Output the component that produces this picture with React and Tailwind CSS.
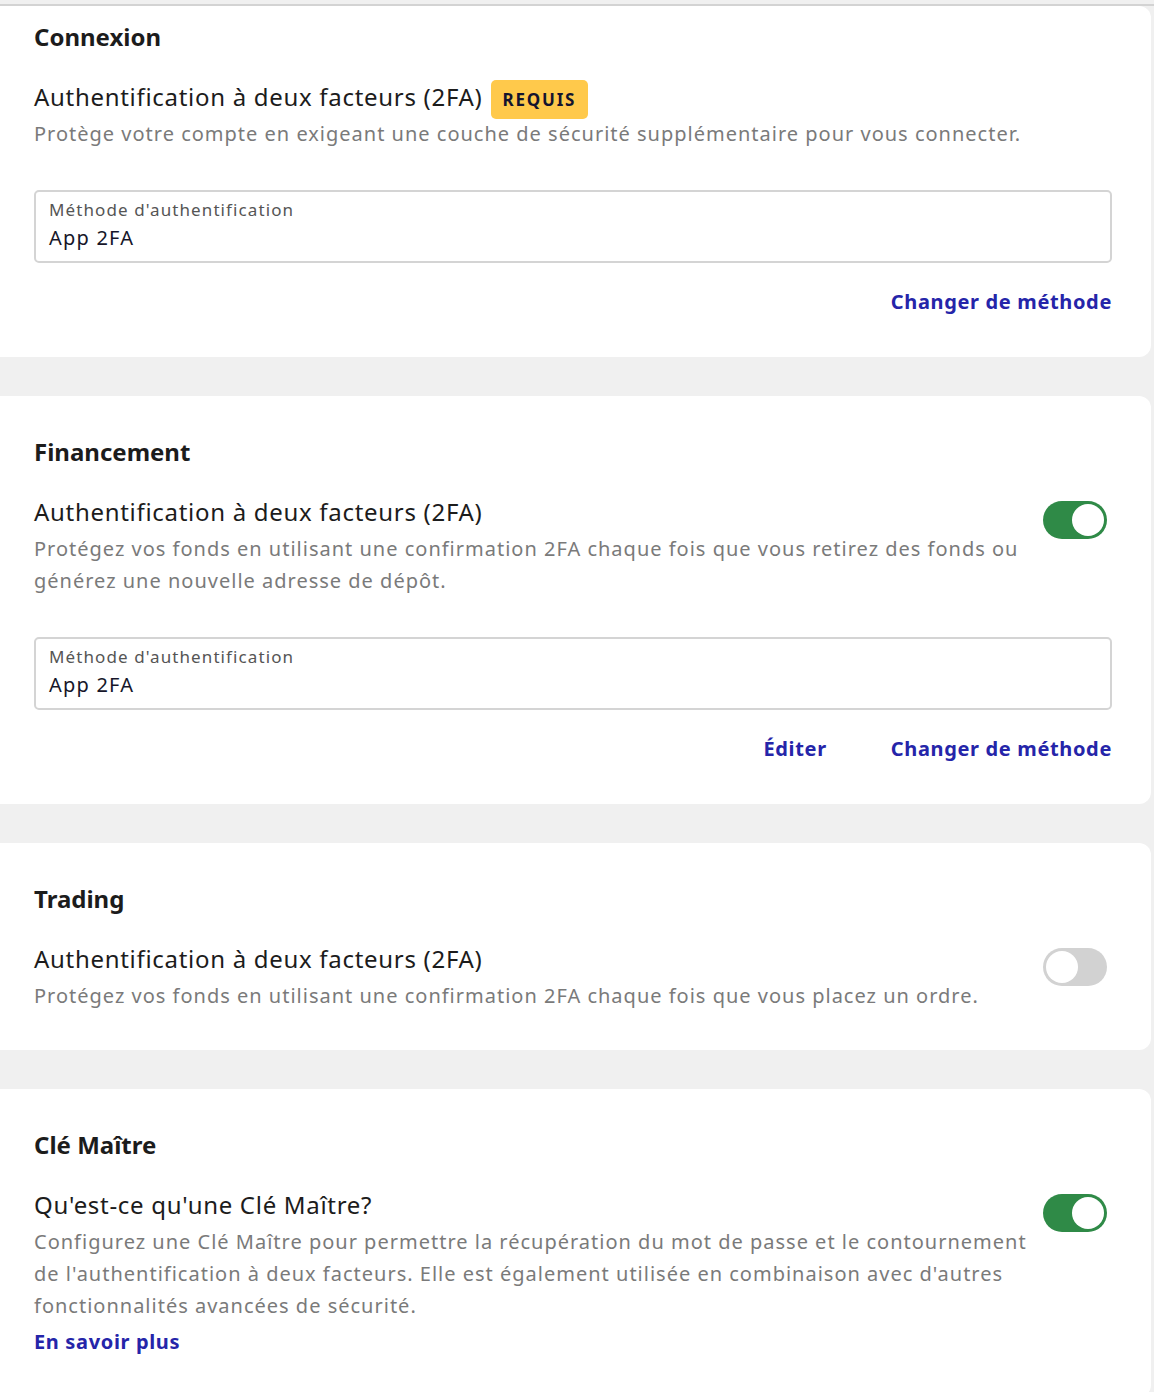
const font = { fontFamily: '"Noto Sans", "Open Sans", sans-serif' };

function Toggle({ on }) {
  return (
    <div
      className={`mt-[5px] mr-[5px] w-16 h-[38px] shrink-0 rounded-full p-[3px] flex items-center ${
        on ? "bg-[#2f8a47] justify-end" : "bg-[#d2d2d2] justify-start"
      }`}
    >
      <div className="w-8 h-8 rounded-full bg-white" />
    </div>
  );
}

function Method() {
  return (
    <div className="mt-[40px] border-2 border-[#d4d4d4] rounded-[5px] h-[73px] px-[13px] pt-[6px]">
      <div className="text-[17px] leading-6 text-[#555] tracking-[1.1px]">Méthode d'authentification</div>
      <div className="mt-[2px] text-[20px] leading-7 text-[#16162a] tracking-[1.2px]">App 2FA</div>
    </div>
  );
}

function Card({ children, first, tight }) {
  return (
    <div
      className={`bg-white rounded-r-xl pl-[34px] pr-[39px] ${tight ? "pb-[38px]" : "pb-[41px]"} ${
        first ? "pt-[15px]" : "pt-[40px]"
      }`}
    >
      {children}
    </div>
  );
}

function Heading({ children }) {
  return <h2 className="text-[24px] leading-8 font-bold text-[#1c1c1c]">{children}</h2>;
}

function Title({ children }) {
  return <div className="text-[24px] leading-8 text-[#1c1c1c] tracking-[0.7px]">{children}</div>;
}

function Desc({ children }) {
  return <p className="mt-[5px] text-[20px] leading-8 text-[#7a7a7a] tracking-[1px]">{children}</p>;
}

function Link({ children }) {
  return <a className="text-[20px] leading-7 font-bold text-[#2525a9] tracking-[0.65px] cursor-pointer">{children}</a>;
}

function Row({ children, on }) {
  return (
    <div className="mt-7 flex items-start justify-between gap-3">
      <div className="max-w-[1000px]">{children}</div>
      <Toggle on={on} />
    </div>
  );
}

export default function App() {
  return (
    <div className="min-h-screen bg-[#f0f0f0] pr-[3px]" style={font}>
      <div className="h-[4px]" />
      <div className="h-[2px] bg-[#d3d3d3] mr-[-3px]" />
      <div className="flex flex-col gap-[39px]">
        <Card first>
          <Heading>Connexion</Heading>
          <div className="mt-7 flex items-start gap-2">
            <Title>Authentification à deux facteurs (2FA)</Title>
            <span className="-mt-px -mb-2 bg-[#ffc94b] rounded-[5px] h-[39px] px-3 flex items-center text-[17px] font-bold tracking-[1.8px] text-[#14142e]">
              REQUIS
            </span>
          </div>
          <Desc>Protège votre compte en exigeant une couche de sécurité supplémentaire pour vous connecter.</Desc>
          <Method />
          <div className="mt-[25px] flex justify-end">
            <Link>Changer de méthode</Link>
          </div>
        </Card>

        <Card>
          <Heading>Financement</Heading>
          <Row on>
            <Title>Authentification à deux facteurs (2FA)</Title>
            <Desc>
              Protégez vos fonds en utilisant une confirmation 2FA chaque fois que vous retirez des fonds ou générez une nouvelle adresse de dépôt.
            </Desc>
          </Row>
          <Method />
          <div className="mt-[25px] flex justify-end gap-16">
            <Link>Éditer</Link>
            <Link>Changer de méthode</Link>
          </div>
        </Card>

        <Card tight>
          <Heading>Trading</Heading>
          <Row>
            <Title>Authentification à deux facteurs (2FA)</Title>
            <Desc>Protégez vos fonds en utilisant une confirmation 2FA chaque fois que vous placez un ordre.</Desc>
          </Row>
        </Card>

        <Card>
          <Heading>Clé Maître</Heading>
          <Row on>
            <Title>Qu'est-ce qu'une Clé Maître?</Title>
            <Desc>
              Configurez une Clé Maître pour permettre la récupération du mot de passe et le contournement de l'authentification à deux facteurs. Elle est également utilisée en combinaison avec d'autres fonctionnalités avancées de sécurité.
            </Desc>
            <div className="mt-[6px]">
              <Link>En savoir plus</Link>
            </div>
          </Row>
        </Card>
      </div>
    </div>
  );
}
